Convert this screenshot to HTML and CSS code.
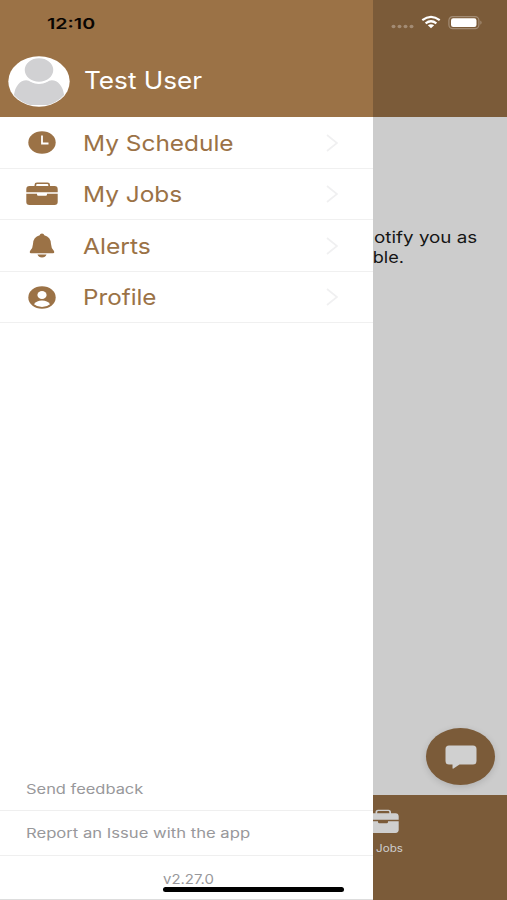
FILE: index.html
```html
<!DOCTYPE html>
<html lang="en">
<head>
<meta charset="utf-8">
<title>Menu</title>
<link rel="stylesheet" href="styles.css">
</head>
<body>
<svg class="defs" width="0" height="0">
  <symbol id="case" viewBox="0 0 32 24" preserveAspectRatio="none">
    <path fill-rule="evenodd" d="M8.500 4V3Q8.500 .6 11 .6H21.500Q24 .6 24 3V4H28.500Q31.700 4 31.700 7.300V10.200H.3V7.300Q.3 4 3.500 4ZM10.200 4H22.300V3Q22.300 2 21.200 2H11.300Q10.200 2 10.200 3Z"/>
    <path d="M.3 11.800H11V12.500Q11 13.700 12.300 13.700H19.800Q21 13.700 21 12.500V11.800H31.700V20Q31.700 23 28.500 23H3.500Q.3 23 .3 20Z"/>
  </symbol>
  <symbol id="chevron" viewBox="0 0 12 20"><path d="M1 2L11 10L1 18" fill="none" stroke="#f0f0f1" stroke-width="1.700"/></symbol>
</svg>
<div class="phone">
  <main class="page">
    <header class="page-bar"></header>
    <section class="content">
      <p class="notice"><span class="wide w-notify">notify you as</span><span class="wide w-ble">available.</span></p>
      <button class="chat" aria-label="Chat">
        <svg width="32" height="24" viewBox="0 0 32 24"><path fill="#d0d0d0" d="M4 .5H28Q31.500 .5 31.500 4V16Q31.500 19.500 28 19.500H14.500L8.500 23.500Q7.500 24 7.500 22.800V19.500H4Q.5 19.500 .5 16V4Q.5 .5 4 .5Z"/></svg>
      </button>
    </section>
    <nav class="tabs"><div class="tab"><svg width="32" height="25" fill="#cfcfcf"><use href="#case"/></svg><span class="wide w-tab">My Jobs</span></div></nav>
  </main>

  <aside class="drawer">
    <header class="user">
      <svg class="avatar" width="62" height="51" viewBox="0 0 62 51">
        <defs><clipPath id="face"><ellipse cx="31" cy="25.500" rx="30" ry="24.500"/></clipPath></defs>
        <ellipse cx="31" cy="25.500" rx="30.700" ry="25.200" fill="#fff"/>
        <g clip-path="url(#face)" fill="#d1d1d3"><path d="M5.500 49V42Q7 27 16 24.500Q20 23.500 23 26Q31 30 39 26Q42 23.500 46 24.500Q55 27 56.500 42V49Z"/><ellipse cx="31" cy="14" rx="15" ry="12.500" stroke="#fff" stroke-width="1.500"/></g>
      </svg>
      <span class="wide w-user">Test User</span>
    </header>
    <ul class="menu">
      <li><span class="icon"><svg width="28" height="23" viewBox="0 0 28 23"><ellipse cx="14" cy="11.500" rx="13.700" ry="11.200"/><path d="M14 4.500V12.500H20.500" fill="none" stroke="#fff" stroke-width="1.800"/></svg></span><span class="wide w-schedule">My Schedule</span><svg class="chev" width="12" height="20"><use href="#chevron"/></svg></li>
      <li><span class="icon"><svg width="32" height="24"><use href="#case"/></svg></span><span class="wide w-jobs">My Jobs</span><svg class="chev" width="12" height="20"><use href="#chevron"/></svg></li>
      <li><span class="icon"><svg width="26" height="25" viewBox="0 0 26 25"><path d="M13 .5Q15 .5 15.300 2.300Q21.800 4 22 11Q22.200 15.500 24.800 17.700Q26 20 24 20.200H2Q0 20 1.200 17.700Q3.800 15.500 4 11Q4.200 4 10.700 2.300Q11 .5 13 .5ZM8.500 21.600H17.500Q16.500 24.500 13 24.500Q9.500 24.500 8.500 21.600Z"/></svg></span><span class="wide w-alerts">Alerts</span><svg class="chev" width="12" height="20"><use href="#chevron"/></svg></li>
      <li><span class="icon"><svg width="28" height="23" viewBox="0 0 28 23"><ellipse cx="14" cy="11.500" rx="13.700" ry="11.200"/><ellipse cx="14" cy="9" rx="4.600" ry="4" fill="#fff"/><path fill="#fff" d="M6 18.200Q8.500 14.500 14 14.500Q19.500 14.500 22 18.200Q18.800 21 14 21Q9.200 21 6 18.200Z"/></svg></span><span class="wide w-profile">Profile</span><svg class="chev" width="12" height="20"><use href="#chevron"/></svg></li>
    </ul>
    <ul class="links">
      <li><span class="wide w-send">Send feedback</span></li>
      <li><span class="wide w-report">Report an Issue with the app</span></li>
      <li class="version"><span class="wide w-version">v2.27.0</span></li>
    </ul>
  </aside>

  <div class="status">
    <span class="wide w-time">12:10</span>
    <svg class="signals" width="94" height="16" viewBox="0 0 94 16">
      <g fill="#a38c74"><ellipse cx="3.500" cy="11.500" rx="2" ry="1.700"/><ellipse cx="9.500" cy="11.500" rx="2" ry="1.700"/><ellipse cx="15.500" cy="11.500" rx="2" ry="1.700"/><ellipse cx="21.500" cy="11.500" rx="2" ry="1.700"/></g>
      <g fill="none" stroke="#fff" stroke-width="2.200"><path d="M32.300 5.200Q41 -1.400 49.700 5.200"/><path d="M35.600 8.300Q41 4.200 46.400 8.300"/></g>
      <path fill="#fff" d="M37.800 10.300Q41 8.100 44.200 10.300L41 13.200Z"/>
      <rect x="58.900" y="1.600" width="30" height="12" rx="3.800" fill="none" stroke="#a38c74" stroke-width="1.200"/>
      <rect x="61" y="3.300" width="25.500" height="8.600" rx="2.200" fill="#fff"/>
      <path fill="#a38c74" d="M90.300 5.500Q93 7.600 90.300 9.700Z"/>
    </svg>
  </div>
  <div class="home"></div>
</div>
</body>
</html>
```
FILE: styles.css
```css
* { box-sizing: border-box; }
body { margin: 0; font-family: Inter, "Liberation Sans", sans-serif; }
ul { list-style: none; margin: 0; padding: 0; }
.defs { position: absolute; }
.phone { position: relative; width: 507px; height: 900px; overflow: hidden; }
.wide { display: inline-block; white-space: nowrap; transform: scaleX(var(--sx, 1.2)); transform-origin: left center; }
.w-user { --sx: 1.09; }
.w-schedule, .w-jobs { --sx: 1.11; }
.w-profile { --sx: 1.1; }
.w-alerts { --sx: 1.12; }
.w-send { --sx: 1.265; }
.w-report { --sx: 1.28; }
.w-version { --sx: 1.15; }
.w-time { --sx: 1.31; }
.w-notify { --sx: 1.175; }
.w-tab { --sx: 1.16; }

.page { display: flex; flex-direction: column; height: 100%; background: #ccc; }
.page-bar { height: 117px; background: #7b5b39; }
.content { position: relative; flex: 1; }
.notice { display: flex; flex-direction: column; align-items: flex-end; margin: 0; padding: 110px 30px 0 0; font-size: 16px; line-height: 20px; color: #151515; }
.notice .wide { transform-origin: right center; }
.w-ble { --sx: 1.13; margin-right: 73px; }
.chat { position: absolute; right: 12px; bottom: 10px; width: 69px; height: 57px; padding: 0; border: 0; border-radius: 50%; background: #7b5b39; box-shadow: 0 2px 7px rgba(0,0,0,.14); display: flex; align-items: center; justify-content: center; }
.tabs { height: 105px; background: #7b5b39; padding: 14px 0 0 343px; }
.tab { width: 80px; display: flex; flex-direction: column; align-items: center; color: #cfcfcf; font-size: 10px; line-height: 12px; gap: 8px; }
.tab .wide { transform-origin: center; margin-right: 7px; }

.drawer { position: absolute; left: 0; top: 0; width: 372.5px; height: 900px; background: #fff; display: flex; flex-direction: column; }
.user { height: 117px; background: #9b7246; color: #fff; display: flex; align-items: center; padding: 45px 0 0 8px; gap: 14px; font-size: 24px; }
.w-user { margin-top: -2px; }
.menu { flex: 1; color: #9b7246; font-size: 22px; }
.menu li { display: flex; align-items: center; height: 51.5px; padding-top: 1px; border-bottom: 1px solid #f0f0f0; padding-right: 35px; }
.icon { width: 83px; display: flex; justify-content: center; fill: #9b7246; }
.chev { margin-left: auto; }
.links { color: #98989b; font-size: 13px; }
.links li { height: 44.5px; display: flex; align-items: center; padding: 1px 0 0 25.5px; border-bottom: 1px solid #efefef; }
.links .version { padding: 4px 0 0 162.5px; border-color: #ddd; }

.status { position: absolute; left: 0; top: 15px; width: 507px; height: 16px; display: flex; align-items: center; justify-content: space-between; padding: 0 23.5px 0 47px; font-size: 15px; font-weight: 600; color: #090502; }
.home { position: absolute; left: 163px; top: 887px; width: 181px; height: 5px; border-radius: 3px; background: #000; }
```
